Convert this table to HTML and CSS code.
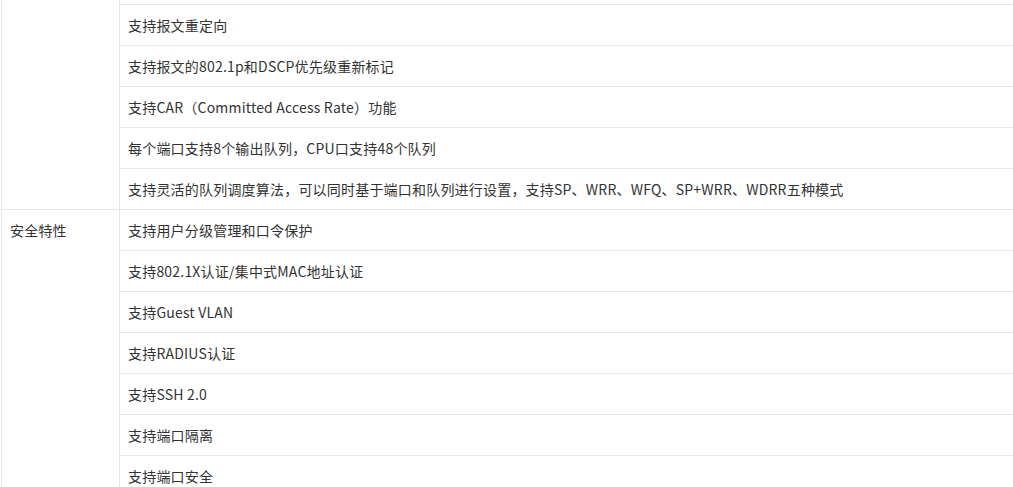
FILE: index.html
```html
<!DOCTYPE html>
<html lang="zh-CN">
<head>
<meta charset="UTF-8" />
<meta name="viewport" content="width=device-width, initial-scale=1" />
<title>产品规格</title>
<link rel="stylesheet" href="styles.css">
</head>
<body>

<table class="spec-table">
  <tbody>
    <tr>
      <td class="spec-name" rowspan="6">QoS特性</td>
      <td>支持基于ACL的流分类</td>
    </tr>
    <tr><td>支持报文重定向</td></tr>
    <tr><td>支持报文的802.1p和DSCP优先级重新标记</td></tr>
    <tr><td>支持CAR（Committed Access Rate）功能</td></tr>
    <tr><td>每个端口支持8个输出队列，CPU口支持48个队列</td></tr>
    <tr><td>支持灵活的队列调度算法，可以同时基于端口和队列进行设置，支持SP、WRR、WFQ、SP+WRR、WDRR五种模式</td></tr>
    <tr>
      <td class="spec-name" rowspan="8">安全特性</td>
      <td>支持用户分级管理和口令保护</td>
    </tr>
    <tr><td>支持802.1X认证/集中式MAC地址认证</td></tr>
    <tr><td>支持Guest VLAN</td></tr>
    <tr><td>支持RADIUS认证</td></tr>
    <tr><td>支持SSH 2.0</td></tr>
    <tr><td>支持端口隔离</td></tr>
    <tr><td>支持端口安全</td></tr>
    <tr><td>支持IP+MAC+端口绑定</td></tr>
  </tbody>
</table>

</body>
</html>
```

FILE: styles.css
```css
body {
  margin: 0;
  padding: 0 0 0 1px;
  font-family: "Microsoft YaHei", "Noto Sans CJK SC", "Noto Sans", sans-serif;
  font-size: 14px;
  letter-spacing: 0.2px;
  color: #333;
  background: #fff;
}
.spec-table {
  width: 1013px;
  margin-top: -37px;
  border-collapse: collapse;
  table-layout: fixed;
}
.spec-table td {
  height: 41px;
  padding: 0 8px;
  box-sizing: border-box;
  border: 1px solid #e6e6e6;
  border-top: none;
  border-right: none;
  line-height: 20px;
  vertical-align: middle;
  white-space: nowrap;
}
.spec-table td.spec-name {
  width: 118px;
  padding-top: 10px;
  vertical-align: top;
}
```
